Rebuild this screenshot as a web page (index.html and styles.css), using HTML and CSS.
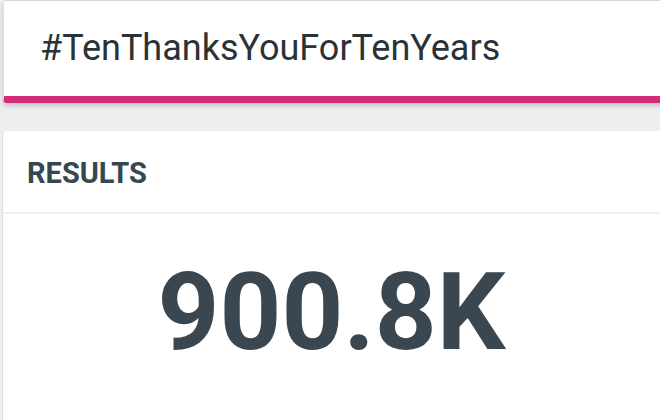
FILE: index.html
```html
<!DOCTYPE html>
<html>
<head>
<meta charset="utf-8">
<link rel="stylesheet" href="styles.css">
</head>
<body>
  <div class="search-card">
    <div class="search-text">#TenThanksYouForTenYears</div>
  </div>
  <div class="results-card">
    <div class="results-head">RESULTS</div>
    <div class="results-body">
      <div class="big-number">900.8K</div>
    </div>
  </div>
</body>
</html>
```

FILE: styles.css
```css
html, body {
  margin: 0;
  padding: 0;
}
body {
  background: #eceef0;
  font-family: Roboto, "Liberation Sans", sans-serif;
  width: 660px;
  height: 420px;
  overflow: hidden;
}
.search-card {
  margin-left: 3px;
  margin-right: -10px;
  background: #ffffff;
  border-top: 1px solid #d3d9dc;
  border-left: 1px solid #dfe3e5;
  border-bottom: 7px solid #d42c78;
  border-radius: 4px;
  box-shadow: 0 3px 5px rgba(0, 0, 0, 0.18);
  display: flex;
  align-items: center;
  box-sizing: border-box;
  height: 103px;
}
.search-text {
  padding-left: 36px;
  padding-bottom: 2px;
  font-size: 36px;
  color: #2b3237;
}
.results-card {
  margin-top: 28px;
  margin-left: 2px;
  margin-right: -10px;
  background: #ffffff;
  border-left: 1px solid #dcdfe1;
  border-radius: 4px 0 0 0;
  height: 300px;
}
.results-head {
  display: flex;
  align-items: center;
  padding-left: 24px;
  padding-top: 2px;
  font-size: 29px;
  font-weight: 700;
  color: #37474f;
  border-bottom: 2px solid #eceef0;
  box-sizing: border-box;
  height: 83px;
}
.results-body {
  display: flex;
  justify-content: center;
  padding-right: 10px;
  padding-top: 44px;
}
.big-number {
  font-size: 108px;
  font-weight: 700;
  color: #3a4750;
  line-height: 1;
}
```
